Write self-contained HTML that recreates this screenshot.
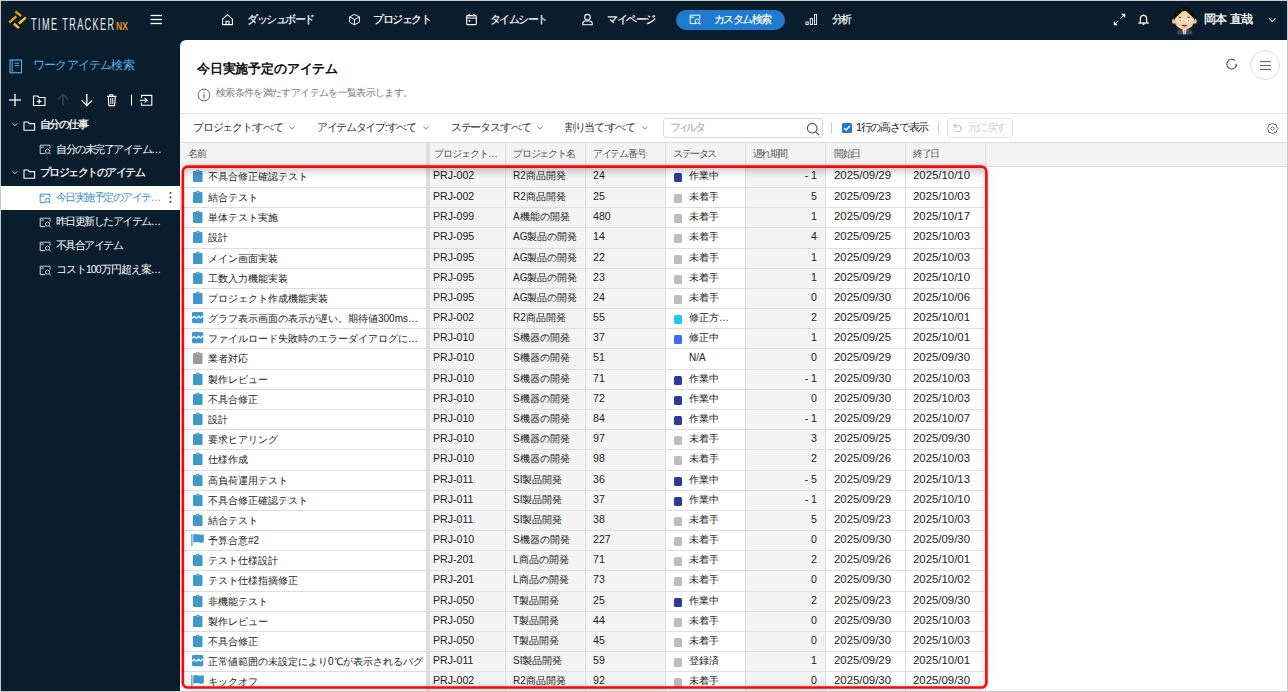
<!DOCTYPE html>
<html lang="ja">
<head>
<meta charset="utf-8">
<style>
*{box-sizing:border-box;margin:0;padding:0}
html,body{width:1288px;height:692px;overflow:hidden}
body{position:relative;background:#091d2c;font-family:"Liberation Sans",sans-serif;color:#222;}
.frame{position:absolute;left:0;top:0;width:1288px;height:692px;border:1px solid #c9c9c9;pointer-events:none;z-index:50}
.abs{position:absolute;white-space:nowrap}
/* header */
.nav{color:#fff;font-size:10.5px;top:12px;line-height:14px;-webkit-text-stroke:0.2px #fff}
.pill{position:absolute;left:676px;top:10px;width:109px;height:20px;border-radius:10px;background:#1f7bd0}
/* sidebar */
.side{color:#fff;font-size:10.5px;line-height:14px;-webkit-text-stroke:0.25px #fff}
.sel{position:absolute;left:1px;top:186px;width:179px;height:24px;background:#fff}
/* main */
.main{position:absolute;left:180px;top:40px;width:1107px;height:651px;background:#fff;border-top-left-radius:6px;overflow:hidden}
.flt{top:121px;font-size:11px;line-height:13px;color:#333}
.chev{top:126px;width:6px;height:4px}
.th{top:148px;font-size:10px;line-height:12px;color:#555}
.td{font-size:10.6px;line-height:12px;color:#222}
.tj{font-size:10px}
.dt{font-size:11.4px}
#f90{letter-spacing:-0.59px}
#f1{letter-spacing:-1.50px}
#f2{letter-spacing:-1.48px}
#f3{letter-spacing:-1.60px}
#f4{letter-spacing:-1.40px}
#f5{letter-spacing:-1.60px}
#f6{letter-spacing:-1.80px}
#f7{letter-spacing:-0.79px}
#f8{letter-spacing:-1.55px}
#f9{letter-spacing:-1.47px}
#f10{letter-spacing:-1.52px}
#f11{letter-spacing:-1.55px}
#f12{letter-spacing:-1.55px}
#f13{letter-spacing:-1.55px}
#f14{letter-spacing:-1.00px}
#f15{letter-spacing:-0.17px}
#f16{letter-spacing:-0.65px}
#f17{letter-spacing:-1.23px}
#f18{letter-spacing:-1.31px}
#f19{letter-spacing:-1.30px}
#f20{letter-spacing:-1.29px}
#f21{letter-spacing:-2.80px}
#f22{letter-spacing:-1.40px}
#f23{letter-spacing:-1.67px}
#f24{letter-spacing:-1.40px}
#f25{letter-spacing:-1.00px}
#f26{letter-spacing:-1.17px}
#f27{letter-spacing:-1.26px}
#f28{letter-spacing:-1.38px}
#f29{letter-spacing:-1.67px}
#f30{letter-spacing:-1.50px}
#f31{letter-spacing:-1.30px}
</style>
</head>
<body>
<div class="frame"></div>

<!-- ===== HEADER ===== -->
<svg class="abs" style="left:7px;top:9px" width="22" height="22" viewBox="0 0 22 22">
  <g stroke-linecap="butt" stroke-width="2.5">
    <line x1="8.4" y1="2.4" x2="14.2" y2="7.1" stroke="#f39a1e"/>
    <line x1="2.2" y1="13.6" x2="9.3" y2="7.4" stroke="#f39a1e"/>
    <line x1="12.1" y1="14.5" x2="18.9" y2="8.4" stroke="#f6c12e"/>
    <line x1="6.9" y1="14.8" x2="12.1" y2="19.1" stroke="#f6c12e"/>
  </g>
</svg>
<div class="abs" style="left:31px;top:16px;font-size:16.5px;line-height:16px;color:#eef0f2;transform:scaleX(0.55);transform-origin:0 0;letter-spacing:2.6px">TIME TRACKER</div>
<div class="abs" style="left:116px;top:22px;font-size:10px;line-height:10px;font-weight:bold;color:#e8931f;transform:scaleX(0.85);transform-origin:0 0">NX</div>
<svg class="abs" style="left:150px;top:14px" width="13" height="12"><g stroke="#fff" stroke-width="1.3"><line x1="0.5" y1="1.5" x2="12" y2="1.5"/><line x1="0.5" y1="5.5" x2="12" y2="5.5"/><line x1="0.5" y1="9.5" x2="12" y2="9.5"/></g></svg>

<div class="pill"></div>
<!-- nav icons -->
<svg class="abs" style="left:221px;top:13px" width="13" height="13" viewBox="0 0 13 13"><path d="M1.6 6.2 L6.5 1.6 L11.4 6.2 V11.6 H1.6 Z" fill="none" stroke="#fff" stroke-width="1.1" stroke-linejoin="round"/><path d="M5 11.6 V8.2 H8 V11.6" fill="none" stroke="#fff" stroke-width="1.1"/></svg>
<svg class="abs" style="left:348px;top:13px" width="13" height="13" viewBox="0 0 13 13"><path d="M6.5 1.3 L11.4 3.9 V9.2 L6.5 11.8 L1.6 9.2 V3.9 Z" fill="none" stroke="#fff" stroke-width="1" stroke-linejoin="round"/><path d="M1.6 3.9 L6.5 6.5 L11.4 3.9 M6.5 6.5 V11.8" fill="none" stroke="#fff" stroke-width="1"/></svg>
<svg class="abs" style="left:465px;top:13px" width="13" height="13" viewBox="0 0 13 13"><rect x="1.7" y="2.6" width="9.6" height="9" rx="0.8" fill="none" stroke="#fff" stroke-width="1.1"/><line x1="1.7" y1="5" x2="11.3" y2="5" stroke="#fff" stroke-width="1"/><line x1="4.2" y1="1" x2="4.2" y2="3.4" stroke="#fff" stroke-width="1.1"/><line x1="8.8" y1="1" x2="8.8" y2="3.4" stroke="#fff" stroke-width="1.1"/><rect x="3.6" y="7" width="1.6" height="1.6" fill="#fff"/></svg>
<svg class="abs" style="left:581px;top:13px" width="13" height="13" viewBox="0 0 13 13"><circle cx="6.5" cy="4.2" r="2.8" fill="none" stroke="#fff" stroke-width="1.1"/><path d="M1.8 11.8 V10.6 Q1.8 8 4.6 8 H8.4 Q11.2 8 11.2 10.6 V11.8 Z" fill="none" stroke="#fff" stroke-width="1.1" stroke-linejoin="round"/></svg>
<svg class="abs" style="left:689px;top:14px" width="13" height="11" viewBox="0 0 13 11"><path d="M7 9.6 H1.2 V1.2 H10.8 V4.8" fill="none" stroke="#fff" stroke-width="1"/><line x1="1.2" y1="3.2" x2="5" y2="3.2" stroke="#fff" stroke-width="1"/><circle cx="8.4" cy="7.2" r="2.2" fill="none" stroke="#fff" stroke-width="1"/><line x1="10" y1="8.8" x2="11.6" y2="10.4" stroke="#fff" stroke-width="1.1"/></svg>
<svg class="abs" style="left:805px;top:13px" width="13" height="13" viewBox="0 0 13 13"><rect x="1" y="9" width="2.2" height="2.6" fill="none" stroke="#fff" stroke-width="0.9"/><rect x="5.2" y="5.6" width="2.2" height="6" fill="none" stroke="#fff" stroke-width="0.9"/><rect x="9.4" y="1.6" width="2.2" height="10" fill="none" stroke="#fff" stroke-width="0.9"/></svg>
<!-- right header -->
<svg class="abs" style="left:1112px;top:12px" width="15" height="15" viewBox="0 0 15 15"><g stroke="#fff" stroke-width="0.9" fill="none"><line x1="8.6" y1="6.4" x2="12" y2="3"/><line x1="2.6" y1="12.4" x2="6.2" y2="8.8"/></g><path d="M13.2 1.8 L13.2 6 L9 1.8 Z" fill="#fff"/><path d="M1.8 13.2 L1.8 9.2 L5.8 13.2 Z" fill="#fff"/></svg>
<svg class="abs" style="left:1136px;top:12px" width="15" height="15" viewBox="0 0 15 15"><path d="M4.4 10.8 V6.4 A3.1 3.1 0 0 1 10.6 6.4 V10.8" fill="none" stroke="#fff" stroke-width="1.2"/><line x1="2.2" y1="11" x2="12.8" y2="11" stroke="#fff" stroke-width="1.3"/><path d="M5.8 11.4 L9.2 11.4 L7.5 13.6 Z" fill="#fff"/><path d="M6.9 3.4 L7.5 2 L8.1 3.4 Z" fill="#fff"/></svg>
<svg class="abs" style="left:1171px;top:5px" width="27" height="31" viewBox="0 0 27 31">
  <path d="M5.5 29 Q6 24.6 10.5 23.6 L16.5 23.6 Q21 24.6 21.5 29 Q13.5 30.2 5.5 29 Z" fill="#474747"/>
  <path d="M11.2 23.4 L15.8 23.4 L14.6 29.2 L12.4 29.2 Z" fill="#f2f2f2"/>
  <path d="M12.9 24.6 L14.1 24.6 L14.4 29.2 L12.6 29.2 Z" fill="#a89bd8"/>
  <ellipse cx="2.9" cy="16.2" rx="1.9" ry="2.5" fill="#f7c4a0"/>
  <ellipse cx="23.9" cy="16.2" rx="1.9" ry="2.5" fill="#f7c4a0"/>
  <path d="M3.6 13 Q3.6 24.2 13.4 24.2 Q23.2 24.2 23.2 13 Q23.2 6 13.4 6 Q3.6 6 3.6 13 Z" fill="#fcd5a6"/>
  <path d="M3.2 16 Q1.6 1.8 13.4 1.6 Q25.2 1.8 23.6 16 Q22.8 12.6 21.4 12 L13.4 4.6 L5.4 12 Q4 12.6 3.2 16 Z" fill="#101010"/>
  <ellipse cx="9.4" cy="15.6" rx="2.9" ry="1.8" fill="#fff" stroke="#ccc" stroke-width=".5"/>
  <ellipse cx="17.4" cy="15.6" rx="2.9" ry="1.8" fill="#fff" stroke="#ccc" stroke-width=".5"/>
  <circle cx="9.2" cy="15.4" r="0.75" fill="#666"/><circle cx="17.6" cy="15.4" r="0.75" fill="#666"/>
  <rect x="7.6" y="11.8" width="2.6" height="0.9" fill="#3a2a20"/><rect x="16.6" y="11.8" width="2.6" height="0.9" fill="#3a2a20"/>
  <path d="M10.2 20 Q13.4 19.4 16.6 20 Q13.4 23.4 10.2 20 Z" fill="#b3173c"/><ellipse cx="6.2" cy="19" rx="1.8" ry="1.2" fill="#f7b9a0" opacity=".6"/><ellipse cx="20.6" cy="19" rx="1.8" ry="1.2" fill="#f7b9a0" opacity=".6"/>
</svg>
<div id="f90" class="abs" style="--tw:48;left:1204px;top:12px;font-size:12px;line-height:14px;color:#fff;-webkit-text-stroke:0.35px #fff">岡本 直哉</div>
<div class="abs" style="left:1270px;top:15.5px;width:4.5px;height:4.5px;border-right:1px solid #e8e8e8;border-bottom:1px solid #e8e8e8;transform:rotate(45deg)"></div>
<div id="f1" class="abs nav" style="--tw:67;left:247px">ダッシュボード</div>
<div id="f2" class="abs nav" style="--tw:57.6;left:373px">プロジェクト</div>
<div id="f3" class="abs nav" style="--tw:57;left:490px">タイムシート</div>
<div id="f4" class="abs nav" style="--tw:48.4;left:607px">マイページ</div>
<div id="f5" class="abs nav" style="--tw:57;left:714px">カスタム検索</div>
<div id="f6" class="abs nav" style="--tw:19.2;left:832px">分析</div>

<!-- ===== SIDEBAR ===== -->
<div class="sel"></div>
<svg class="abs" style="left:9px;top:59px" width="14" height="15" viewBox="0 0 14 15"><rect x="1" y="1" width="11.5" height="12.8" fill="none" stroke="#5ab4e6" stroke-width="1.1"/><line x1="3.2" y1="1" x2="3.2" y2="13.8" stroke="#5ab4e6" stroke-width="1"/><line x1="5.6" y1="4.2" x2="10" y2="4.2" stroke="#5ab4e6" stroke-width="1"/><line x1="5.6" y1="6.6" x2="10" y2="6.6" stroke="#5ab4e6" stroke-width="1"/></svg>
<svg class="abs" style="left:8px;top:93px" width="150" height="14" viewBox="0 0 150 14">
 <g stroke="#fff" stroke-width="1.3" fill="none">
  <line x1="1" y1="7" x2="13" y2="7"/><line x1="7" y1="1" x2="7" y2="13"/>
  <path d="M25.5 3 H29.5 L31 4.5 H37 V12.5 H25.5 Z" stroke-width="1.1"/><line x1="28.8" y1="8.4" x2="33.6" y2="8.4" stroke-width="1.1"/><line x1="31.2" y1="6" x2="31.2" y2="10.8" stroke-width="1.1"/>
  <g stroke="#3a4b58"><line x1="55" y1="1.5" x2="55" y2="13"/><polyline points="49.8,6.6 55,1.4 60.2,6.6"/></g>
  <line x1="78.8" y1="1" x2="78.8" y2="12.5"/><polyline points="73.6,7.4 78.8,12.6 84,7.4"/>
  <path d="M99 3.4 H108.4 M100.2 3.4 L100.9 12.6 H106.6 L107.3 3.4 M101.8 3.4 V1.8 H104.8 V3.4" stroke-width="1.1"/><line x1="102.8" y1="5" x2="102.8" y2="11" stroke-width="1"/><line x1="104.8" y1="5" x2="104.8" y2="11" stroke-width="1"/>
  <line x1="123.5" y1="1.6" x2="123.5" y2="12.6" stroke-width="1.1"/>
  <path d="M133.5 5 V2.4 H143.8 V12.2 H133.5 V9.6" stroke-width="1.1"/><line x1="131.8" y1="7.3" x2="139" y2="7.3" stroke-width="1.1"/><polyline points="136.6,5 139,7.3 136.6,9.6" stroke-width="1.1"/>
 </g>
</svg>
<svg class="abs" style="left:10px;top:119px" width="30" height="60" viewBox="0 0 30 60"><g fill="none" stroke="#c9ced3" stroke-width="1"><polyline points="2.4,4.2 5,6.6 7.6,4.2"/><polyline points="2.4,52.2 5,54.6 7.6,52.2"/></g><g fill="none" stroke="#fff" stroke-width="1.1"><path d="M14 3 H18 L19.4 4.6 H24.6 V11.2 H14 Z"/><path d="M14 51 H18 L19.4 52.6 H24.6 V59.2 H14 Z"/></g></svg>
<svg class="abs" style="left:39px;top:144px" width="14" height="132" viewBox="0 0 14 132">
 <g fill="none" stroke-width="1">
  <g stroke="#c6cbd0" transform="translate(0,0)"><path d="M6.6 9.6 H1.2 V1.2 H11 V4.6"/><line x1="1.2" y1="3.2" x2="5" y2="3.2"/><circle cx="8.6" cy="7.2" r="2.1"/><line x1="10.1" y1="8.7" x2="11.8" y2="10.4"/></g>
  <g stroke="#3a8fd6" transform="translate(0,49)"><path d="M6.6 9.6 H1.2 V1.2 H11 V4.6"/><line x1="1.2" y1="3.2" x2="5" y2="3.2"/><circle cx="8.6" cy="7.2" r="2.1"/><line x1="10.1" y1="8.7" x2="11.8" y2="10.4"/></g>
  <g stroke="#c6cbd0" transform="translate(0,73)"><path d="M6.6 9.6 H1.2 V1.2 H11 V4.6"/><line x1="1.2" y1="3.2" x2="5" y2="3.2"/><circle cx="8.6" cy="7.2" r="2.1"/><line x1="10.1" y1="8.7" x2="11.8" y2="10.4"/></g>
  <g stroke="#c6cbd0" transform="translate(0,97)"><path d="M6.6 9.6 H1.2 V1.2 H11 V4.6"/><line x1="1.2" y1="3.2" x2="5" y2="3.2"/><circle cx="8.6" cy="7.2" r="2.1"/><line x1="10.1" y1="8.7" x2="11.8" y2="10.4"/></g>
  <g stroke="#c6cbd0" transform="translate(0,121)"><path d="M6.6 9.6 H1.2 V1.2 H11 V4.6"/><line x1="1.2" y1="3.2" x2="5" y2="3.2"/><circle cx="8.6" cy="7.2" r="2.1"/><line x1="10.1" y1="8.7" x2="11.8" y2="10.4"/></g>
 </g>
</svg>
<svg class="abs" style="left:168px;top:191px" width="5" height="13"><g fill="#555"><circle cx="2.5" cy="2" r="1.1"/><circle cx="2.5" cy="6.4" r="1.1"/><circle cx="2.5" cy="10.8" r="1.1"/></g></svg>
<div id="f7" class="abs" style="--tw:100.7;left:33px;top:58px;font-size:12px;line-height:14px;color:#52b4ec">ワークアイテム検索</div>
<div id="f8" class="abs side" style="--tw:47.8;left:40px;top:117px">自分の仕事</div>
<div id="f9" class="abs side" style="--tw:104.8;left:56px;top:142px;-webkit-text-stroke:0;">自分の未完了アイテム…</div>
<div id="f10" class="abs side" style="--tw:104.8;left:40px;top:165px">プロジェクトのアイテム</div>
<div id="f11" class="abs side" style="--tw:104;left:56px;top:190px;-webkit-text-stroke:0;color:#3c8fd0">今日実施予定のアイテ…</div>
<div id="f12" class="abs side" style="--tw:104;left:56px;top:214px;-webkit-text-stroke:0;">昨日更新したアイテム…</div>
<div id="f13" class="abs side" style="--tw:66.7;left:56px;top:238px;-webkit-text-stroke:0;">不具合アイテム</div>
<div id="f14" class="abs side" style="--tw:104;left:56px;top:262px;-webkit-text-stroke:0;">コスト100万円超え案…</div>

<!-- ===== MAIN ===== -->
<div class="main"></div>
<!-- title -->
<div id="f15" class="abs" style="--tw:140.3;left:197px;top:61px;font-size:13px;line-height:16px;font-weight:bold;color:#111">今日実施予定のアイテム</div>
<svg class="abs" style="left:197px;top:88px" width="14" height="14" viewBox="0 0 14 14"><circle cx="7" cy="7" r="5.9" fill="none" stroke="#666" stroke-width="1"/><rect x="6.5" y="6" width="1.1" height="4.3" fill="#666"/><rect x="6.5" y="3.8" width="1.1" height="1.1" fill="#666"/></svg>
<div id="f16" class="abs" style="--tw:196;left:216px;top:87px;font-size:10px;line-height:12px;color:#7a7a7a">検索条件を満たすアイテムを一覧表示します。</div>
<!-- refresh + menu -->
<svg class="abs" style="left:1225px;top:57px" width="15" height="15" viewBox="0 0 15 15"><path d="M11.6 7.5 A4.9 4.9 0 1 1 9.9 3.4" fill="none" stroke="#555" stroke-width="1.1"/><path d="M11 6.3 L12.4 8.6 L10.2 8.4 Z" fill="#555"/></svg>
<div class="abs" style="left:1250px;top:50px;width:30px;height:30px;border:1px solid #dcdcdc;border-radius:50%"></div>
<svg class="abs" style="left:1259px;top:60px" width="13" height="11"><g stroke="#666" stroke-width="1.1"><line x1="1" y1="1.6" x2="12" y2="1.6"/><line x1="1" y1="5.5" x2="12" y2="5.5"/><line x1="1" y1="9.4" x2="12" y2="9.4"/></g></svg>
<!-- filter bar -->
<div class="abs" style="left:180px;top:113px;width:1107px;height:1px;background:#e2e2e2"></div>
<div id="f17" class="abs flt" style="--tw:90;left:193px">プロジェクト:すべて</div><svg class="abs chev" style="left:289px" width="6" height="4" viewBox="0 0 6 4"><polyline points="0.4,0.6 3,3.2 5.6,0.6" fill="none" stroke="#777" stroke-width="0.9"/></svg>
<div id="f18" class="abs flt" style="--tw:99;left:317px">アイテムタイプ:すべて</div><svg class="abs chev" style="left:423px" width="6" height="4" viewBox="0 0 6 4"><polyline points="0.4,0.6 3,3.2 5.6,0.6" fill="none" stroke="#777" stroke-width="0.9"/></svg>
<div id="f19" class="abs flt" style="--tw:79.7;left:451px">ステータス:すべて</div><svg class="abs chev" style="left:537px" width="6" height="4" viewBox="0 0 6 4"><polyline points="0.4,0.6 3,3.2 5.6,0.6" fill="none" stroke="#777" stroke-width="0.9"/></svg>
<div id="f20" class="abs flt" style="--tw:70;left:565px">割り当て:すべて</div><svg class="abs chev" style="left:642px" width="6" height="4" viewBox="0 0 6 4"><polyline points="0.4,0.6 3,3.2 5.6,0.6" fill="none" stroke="#777" stroke-width="0.9"/></svg>
<div class="abs" style="left:663px;top:118px;width:160px;height:20px;border:1px solid #d9d9d9;border-radius:3px;background:#fff"></div>
<div id="f21" class="abs" style="--tw:34.6;left:670px;top:121px;font-size:11px;line-height:13px;color:#a0a0a0">フィルタ</div>
<svg class="abs" style="left:805px;top:121px" width="16" height="16" viewBox="0 0 16 16"><circle cx="7.2" cy="7.2" r="4.8" fill="none" stroke="#555" stroke-width="1.1"/><line x1="10.6" y1="10.6" x2="14.2" y2="14.2" stroke="#555" stroke-width="1.2"/></svg>
<div class="abs" style="left:831px;top:122px;width:1px;height:12px;background:#d0d0d0"></div>
<div class="abs" style="left:842px;top:123px;width:10px;height:10px;border-radius:1.5px;background:#2379cf"></div>
<svg class="abs" style="left:842px;top:123px" width="10" height="10"><polyline points="2.2,5 4.2,7 7.8,3" fill="none" stroke="#fff" stroke-width="1.4"/></svg>
<div id="f22" class="abs flt" style="--tw:72.3;left:856px;color:#222">1行の高さで表示</div>
<div class="abs" style="left:938px;top:122px;width:1px;height:12px;background:#d0d0d0"></div>
<div class="abs" style="left:947px;top:118px;width:66px;height:20px;border:1px solid #e6e6e6;border-radius:3px"></div>
<svg class="abs" style="left:952px;top:122px" width="11" height="12" viewBox="0 0 11 12"><path d="M2.5 3.8 H6.2 A3 3 0 0 1 6.2 9.8 H3" fill="none" stroke="#bdbdbd" stroke-width="1.1"/><path d="M4.2 1.8 L1.8 3.8 L4.2 5.8" fill="none" stroke="#bdbdbd" stroke-width="1.1"/></svg>
<div id="f23" class="abs flt" style="--tw:38;left:968px;color:#d2d2d2">元に戻す</div>
<svg class="abs" style="left:1266px;top:122px" width="13" height="13" viewBox="0 0 13 13"><path d="M6.5 0.9 L8 2.4 L10.3 2.6 L10.5 4.9 L12 6.5 L10.5 8.1 L10.3 10.4 L8 10.6 L6.5 12.1 L5 10.6 L2.7 10.4 L2.5 8.1 L1 6.5 L2.5 4.9 L2.7 2.6 L5 2.4 Z" fill="none" stroke="#666" stroke-width="1"/><path d="M6.5 4.6 L8.4 6.5 L6.5 8.4 L4.6 6.5 Z" fill="none" stroke="#666" stroke-width="1"/></svg>
<!-- table header -->
<div class="abs" style="left:180px;top:142px;width:1107px;height:25px;background:#f3f3f3;border-top:1px solid #dcdcdc;border-bottom:1px solid #dcdcdc"></div>
<div id="f24" class="abs th" style="--tw:17.6;left:188px">名前</div>
<div id="f25" class="abs th" style="--tw:63;left:434px">プロジェクト…</div>
<div id="f26" class="abs th" style="--tw:62;left:513px">プロジェクト名</div>
<div id="f27" class="abs th" style="--tw:52.7;left:593px">アイテム番号</div>
<div id="f28" class="abs th" style="--tw:43.5;left:673px">ステータス</div>
<div id="f29" class="abs th" style="--tw:34;left:753px">遅れ期間</div>
<div id="f30" class="abs th" style="--tw:26;left:834px">開始日</div>
<div id="f31" class="abs th" style="--tw:26.4;left:913px">終了日</div>
<div class="abs" style="left:430px;top:167px;width:235px;height:525px;background:#f4f4f4"></div>
<div class="abs" style="left:745px;top:167px;width:80px;height:525px;background:#f4f4f4"></div>
<div class="abs" style="left:505px;top:143px;width:1px;height:549px;background:#dedede"></div>
<div class="abs" style="left:585px;top:143px;width:1px;height:549px;background:#dedede"></div>
<div class="abs" style="left:665px;top:143px;width:1px;height:549px;background:#dedede"></div>
<div class="abs" style="left:745px;top:143px;width:1px;height:549px;background:#dedede"></div>
<div class="abs" style="left:825px;top:143px;width:1px;height:549px;background:#dedede"></div>
<div class="abs" style="left:905px;top:143px;width:1px;height:549px;background:#dedede"></div>
<div class="abs" style="left:985px;top:143px;width:1px;height:549px;background:#dedede"></div>
<div class="abs" style="left:426px;top:143px;width:4px;height:549px;background:#dedede"></div>
<div class="abs" style="left:180px;top:187px;width:805px;height:1px;background:#dedede"></div>
<svg class="abs" style="left:192px;top:169px" width="12" height="14" viewBox="0 0 12 14"><rect x="1" y="2" width="9.5" height="11" rx="0.8" fill="#3d98cc"/><rect x="4.3" y="0.8" width="3" height="2.2" rx="0.6" fill="#3d98cc"/><rect x="5.3" y="1.8" width="1" height="1" fill="#fff" opacity=".8"/></svg>
<div class="abs td tj" style="left:208px;top:171px;width:218px;overflow:hidden">不具合修正確認テスト</div>
<div class="abs td" style="left:433px;top:169px">PRJ-002</div>
<div class="abs td tj" style="left:513px;top:170px">R2商品開発</div>
<div class="abs td" style="left:593px;top:169px">24</div>
<div class="abs" style="left:674px;top:173px;width:8px;height:9px;border-radius:1.5px;background:#2b3a9c"></div>
<div class="abs td tj" style="left:689px;top:170px">作業中</div>
<div class="abs td" style="left:745px;width:72px;text-align:right;top:169px">- 1</div>
<div class="abs td dt" style="left:834px;top:169px">2025/09/29</div>
<div class="abs td dt" style="left:913px;top:169px">2025/10/10</div>
<div class="abs" style="left:180px;top:207px;width:805px;height:1px;background:#dedede"></div>
<svg class="abs" style="left:192px;top:190px" width="12" height="14" viewBox="0 0 12 14"><rect x="1" y="2" width="9.5" height="11" rx="0.8" fill="#3d98cc"/><rect x="4.3" y="0.8" width="3" height="2.2" rx="0.6" fill="#3d98cc"/><rect x="5.3" y="1.8" width="1" height="1" fill="#fff" opacity=".8"/></svg>
<div class="abs td tj" style="left:208px;top:192px;width:218px;overflow:hidden">結合テスト</div>
<div class="abs td" style="left:433px;top:190px">PRJ-002</div>
<div class="abs td tj" style="left:513px;top:191px">R2商品開発</div>
<div class="abs td" style="left:593px;top:190px">25</div>
<div class="abs" style="left:674px;top:194px;width:8px;height:9px;border-radius:1.5px;background:#bdbdbd"></div>
<div class="abs td tj" style="left:689px;top:191px">未着手</div>
<div class="abs td" style="left:745px;width:72px;text-align:right;top:190px">5</div>
<div class="abs td dt" style="left:834px;top:190px">2025/09/23</div>
<div class="abs td dt" style="left:913px;top:190px">2025/10/03</div>
<div class="abs" style="left:180px;top:227px;width:805px;height:1px;background:#dedede"></div>
<svg class="abs" style="left:192px;top:210px" width="12" height="14" viewBox="0 0 12 14"><rect x="1" y="2" width="9.5" height="11" rx="0.8" fill="#3d98cc"/><rect x="4.3" y="0.8" width="3" height="2.2" rx="0.6" fill="#3d98cc"/><rect x="5.3" y="1.8" width="1" height="1" fill="#fff" opacity=".8"/></svg>
<div class="abs td tj" style="left:208px;top:212px;width:218px;overflow:hidden">単体テスト実施</div>
<div class="abs td" style="left:433px;top:210px">PRJ-099</div>
<div class="abs td tj" style="left:513px;top:211px">A機能の開発</div>
<div class="abs td" style="left:593px;top:210px">480</div>
<div class="abs" style="left:674px;top:214px;width:8px;height:9px;border-radius:1.5px;background:#bdbdbd"></div>
<div class="abs td tj" style="left:689px;top:211px">未着手</div>
<div class="abs td" style="left:745px;width:72px;text-align:right;top:210px">1</div>
<div class="abs td dt" style="left:834px;top:210px">2025/09/29</div>
<div class="abs td dt" style="left:913px;top:210px">2025/10/17</div>
<div class="abs" style="left:180px;top:248px;width:805px;height:1px;background:#dedede"></div>
<svg class="abs" style="left:192px;top:230px" width="12" height="14" viewBox="0 0 12 14"><rect x="1" y="2" width="9.5" height="11" rx="0.8" fill="#3d98cc"/><rect x="4.3" y="0.8" width="3" height="2.2" rx="0.6" fill="#3d98cc"/><rect x="5.3" y="1.8" width="1" height="1" fill="#fff" opacity=".8"/></svg>
<div class="abs td tj" style="left:208px;top:232px;width:218px;overflow:hidden">設計</div>
<div class="abs td" style="left:433px;top:230px">PRJ-095</div>
<div class="abs td tj" style="left:513px;top:231px">AG製品の開発</div>
<div class="abs td" style="left:593px;top:230px">14</div>
<div class="abs" style="left:674px;top:234px;width:8px;height:9px;border-radius:1.5px;background:#bdbdbd"></div>
<div class="abs td tj" style="left:689px;top:231px">未着手</div>
<div class="abs td" style="left:745px;width:72px;text-align:right;top:230px">4</div>
<div class="abs td dt" style="left:834px;top:230px">2025/09/25</div>
<div class="abs td dt" style="left:913px;top:230px">2025/10/03</div>
<div class="abs" style="left:180px;top:268px;width:805px;height:1px;background:#dedede"></div>
<svg class="abs" style="left:192px;top:251px" width="12" height="14" viewBox="0 0 12 14"><rect x="1" y="2" width="9.5" height="11" rx="0.8" fill="#3d98cc"/><rect x="4.3" y="0.8" width="3" height="2.2" rx="0.6" fill="#3d98cc"/><rect x="5.3" y="1.8" width="1" height="1" fill="#fff" opacity=".8"/></svg>
<div class="abs td tj" style="left:208px;top:253px;width:218px;overflow:hidden">メイン画面実装</div>
<div class="abs td" style="left:433px;top:251px">PRJ-095</div>
<div class="abs td tj" style="left:513px;top:252px">AG製品の開発</div>
<div class="abs td" style="left:593px;top:251px">22</div>
<div class="abs" style="left:674px;top:255px;width:8px;height:9px;border-radius:1.5px;background:#bdbdbd"></div>
<div class="abs td tj" style="left:689px;top:252px">未着手</div>
<div class="abs td" style="left:745px;width:72px;text-align:right;top:251px">1</div>
<div class="abs td dt" style="left:834px;top:251px">2025/09/29</div>
<div class="abs td dt" style="left:913px;top:251px">2025/10/03</div>
<div class="abs" style="left:180px;top:288px;width:805px;height:1px;background:#dedede"></div>
<svg class="abs" style="left:192px;top:271px" width="12" height="14" viewBox="0 0 12 14"><rect x="1" y="2" width="9.5" height="11" rx="0.8" fill="#3d98cc"/><rect x="4.3" y="0.8" width="3" height="2.2" rx="0.6" fill="#3d98cc"/><rect x="5.3" y="1.8" width="1" height="1" fill="#fff" opacity=".8"/></svg>
<div class="abs td tj" style="left:208px;top:273px;width:218px;overflow:hidden">工数入力機能実装</div>
<div class="abs td" style="left:433px;top:271px">PRJ-095</div>
<div class="abs td tj" style="left:513px;top:272px">AG製品の開発</div>
<div class="abs td" style="left:593px;top:271px">23</div>
<div class="abs" style="left:674px;top:275px;width:8px;height:9px;border-radius:1.5px;background:#bdbdbd"></div>
<div class="abs td tj" style="left:689px;top:272px">未着手</div>
<div class="abs td" style="left:745px;width:72px;text-align:right;top:271px">1</div>
<div class="abs td dt" style="left:834px;top:271px">2025/09/29</div>
<div class="abs td dt" style="left:913px;top:271px">2025/10/10</div>
<div class="abs" style="left:180px;top:308px;width:805px;height:1px;background:#dedede"></div>
<svg class="abs" style="left:192px;top:291px" width="12" height="14" viewBox="0 0 12 14"><rect x="1" y="2" width="9.5" height="11" rx="0.8" fill="#3d98cc"/><rect x="4.3" y="0.8" width="3" height="2.2" rx="0.6" fill="#3d98cc"/><rect x="5.3" y="1.8" width="1" height="1" fill="#fff" opacity=".8"/></svg>
<div class="abs td tj" style="left:208px;top:293px;width:218px;overflow:hidden">プロジェクト作成機能実装</div>
<div class="abs td" style="left:433px;top:291px">PRJ-095</div>
<div class="abs td tj" style="left:513px;top:292px">AG製品の開発</div>
<div class="abs td" style="left:593px;top:291px">24</div>
<div class="abs" style="left:674px;top:295px;width:8px;height:9px;border-radius:1.5px;background:#bdbdbd"></div>
<div class="abs td tj" style="left:689px;top:292px">未着手</div>
<div class="abs td" style="left:745px;width:72px;text-align:right;top:291px">0</div>
<div class="abs td dt" style="left:834px;top:291px">2025/09/30</div>
<div class="abs td dt" style="left:913px;top:291px">2025/10/06</div>
<div class="abs" style="left:180px;top:328px;width:805px;height:1px;background:#dedede"></div>
<svg class="abs" style="left:191px;top:311px" width="13" height="13" viewBox="0 0 13 13"><rect x="1" y="1" width="11.3" height="11.2" rx="1.4" fill="#3d98cc"/><polyline points="1,7.2 3.2,5.4 5.4,7.4 7.6,5.2 9.6,7 12.3,4.8" fill="none" stroke="#fff" stroke-width="1.2" stroke-linejoin="miter"/></svg>
<div class="abs td tj" style="left:208px;top:313px;width:218px;overflow:hidden">グラフ表示画面の表示が遅い。期待値300ms…</div>
<div class="abs td" style="left:433px;top:311px">PRJ-002</div>
<div class="abs td tj" style="left:513px;top:312px">R2商品開発</div>
<div class="abs td" style="left:593px;top:311px">55</div>
<div class="abs" style="left:674px;top:315px;width:8px;height:9px;border-radius:1.5px;background:#1ec8f0"></div>
<div class="abs td tj" style="left:689px;top:312px">修正方…</div>
<div class="abs td" style="left:745px;width:72px;text-align:right;top:311px">2</div>
<div class="abs td dt" style="left:834px;top:311px">2025/09/25</div>
<div class="abs td dt" style="left:913px;top:311px">2025/10/01</div>
<div class="abs" style="left:180px;top:348px;width:805px;height:1px;background:#dedede"></div>
<svg class="abs" style="left:191px;top:331px" width="13" height="13" viewBox="0 0 13 13"><rect x="1" y="1" width="11.3" height="11.2" rx="1.4" fill="#3d98cc"/><polyline points="1,7.2 3.2,5.4 5.4,7.4 7.6,5.2 9.6,7 12.3,4.8" fill="none" stroke="#fff" stroke-width="1.2" stroke-linejoin="miter"/></svg>
<div class="abs td tj" style="left:208px;top:333px;width:218px;overflow:hidden">ファイルロード失敗時のエラーダイアログに…</div>
<div class="abs td" style="left:433px;top:331px">PRJ-010</div>
<div class="abs td tj" style="left:513px;top:332px">S機器の開発</div>
<div class="abs td" style="left:593px;top:331px">37</div>
<div class="abs" style="left:674px;top:335px;width:8px;height:9px;border-radius:1.5px;background:#3d6ef0"></div>
<div class="abs td tj" style="left:689px;top:332px">修正中</div>
<div class="abs td" style="left:745px;width:72px;text-align:right;top:331px">1</div>
<div class="abs td dt" style="left:834px;top:331px">2025/09/25</div>
<div class="abs td dt" style="left:913px;top:331px">2025/10/01</div>
<div class="abs" style="left:180px;top:369px;width:805px;height:1px;background:#dedede"></div>
<svg class="abs" style="left:192px;top:351px" width="12" height="14" viewBox="0 0 12 14"><rect x="1" y="2" width="9.5" height="11" rx="0.8" fill="#9c9c9c"/><rect x="4.3" y="0.8" width="3" height="2.2" rx="0.6" fill="#9c9c9c"/><rect x="5.3" y="1.8" width="1" height="1" fill="#fff" opacity=".8"/></svg>
<div class="abs td tj" style="left:208px;top:353px;width:218px;overflow:hidden">業者対応</div>
<div class="abs td" style="left:433px;top:351px">PRJ-010</div>
<div class="abs td tj" style="left:513px;top:352px">S機器の開発</div>
<div class="abs td" style="left:593px;top:351px">51</div>
<div class="abs td tj" style="left:689px;top:352px">N/A</div>
<div class="abs td" style="left:745px;width:72px;text-align:right;top:351px">0</div>
<div class="abs td dt" style="left:834px;top:351px">2025/09/29</div>
<div class="abs td dt" style="left:913px;top:351px">2025/09/30</div>
<div class="abs" style="left:180px;top:389px;width:805px;height:1px;background:#dedede"></div>
<svg class="abs" style="left:192px;top:372px" width="12" height="14" viewBox="0 0 12 14"><rect x="1" y="2" width="9.5" height="11" rx="0.8" fill="#3d98cc"/><rect x="4.3" y="0.8" width="3" height="2.2" rx="0.6" fill="#3d98cc"/><rect x="5.3" y="1.8" width="1" height="1" fill="#fff" opacity=".8"/></svg>
<div class="abs td tj" style="left:208px;top:374px;width:218px;overflow:hidden">製作レビュー</div>
<div class="abs td" style="left:433px;top:372px">PRJ-010</div>
<div class="abs td tj" style="left:513px;top:373px">S機器の開発</div>
<div class="abs td" style="left:593px;top:372px">71</div>
<div class="abs" style="left:674px;top:376px;width:8px;height:9px;border-radius:1.5px;background:#2b3a9c"></div>
<div class="abs td tj" style="left:689px;top:373px">作業中</div>
<div class="abs td" style="left:745px;width:72px;text-align:right;top:372px">- 1</div>
<div class="abs td dt" style="left:834px;top:372px">2025/09/30</div>
<div class="abs td dt" style="left:913px;top:372px">2025/10/03</div>
<div class="abs" style="left:180px;top:409px;width:805px;height:1px;background:#dedede"></div>
<svg class="abs" style="left:192px;top:392px" width="12" height="14" viewBox="0 0 12 14"><rect x="1" y="2" width="9.5" height="11" rx="0.8" fill="#3d98cc"/><rect x="4.3" y="0.8" width="3" height="2.2" rx="0.6" fill="#3d98cc"/><rect x="5.3" y="1.8" width="1" height="1" fill="#fff" opacity=".8"/></svg>
<div class="abs td tj" style="left:208px;top:394px;width:218px;overflow:hidden">不具合修正</div>
<div class="abs td" style="left:433px;top:392px">PRJ-010</div>
<div class="abs td tj" style="left:513px;top:393px">S機器の開発</div>
<div class="abs td" style="left:593px;top:392px">72</div>
<div class="abs" style="left:674px;top:396px;width:8px;height:9px;border-radius:1.5px;background:#2b3a9c"></div>
<div class="abs td tj" style="left:689px;top:393px">作業中</div>
<div class="abs td" style="left:745px;width:72px;text-align:right;top:392px">0</div>
<div class="abs td dt" style="left:834px;top:392px">2025/09/30</div>
<div class="abs td dt" style="left:913px;top:392px">2025/10/03</div>
<div class="abs" style="left:180px;top:429px;width:805px;height:1px;background:#dedede"></div>
<svg class="abs" style="left:192px;top:412px" width="12" height="14" viewBox="0 0 12 14"><rect x="1" y="2" width="9.5" height="11" rx="0.8" fill="#3d98cc"/><rect x="4.3" y="0.8" width="3" height="2.2" rx="0.6" fill="#3d98cc"/><rect x="5.3" y="1.8" width="1" height="1" fill="#fff" opacity=".8"/></svg>
<div class="abs td tj" style="left:208px;top:414px;width:218px;overflow:hidden">設計</div>
<div class="abs td" style="left:433px;top:412px">PRJ-010</div>
<div class="abs td tj" style="left:513px;top:413px">S機器の開発</div>
<div class="abs td" style="left:593px;top:412px">84</div>
<div class="abs" style="left:674px;top:416px;width:8px;height:9px;border-radius:1.5px;background:#2b3a9c"></div>
<div class="abs td tj" style="left:689px;top:413px">作業中</div>
<div class="abs td" style="left:745px;width:72px;text-align:right;top:412px">- 1</div>
<div class="abs td dt" style="left:834px;top:412px">2025/09/29</div>
<div class="abs td dt" style="left:913px;top:412px">2025/10/07</div>
<div class="abs" style="left:180px;top:449px;width:805px;height:1px;background:#dedede"></div>
<svg class="abs" style="left:192px;top:432px" width="12" height="14" viewBox="0 0 12 14"><rect x="1" y="2" width="9.5" height="11" rx="0.8" fill="#3d98cc"/><rect x="4.3" y="0.8" width="3" height="2.2" rx="0.6" fill="#3d98cc"/><rect x="5.3" y="1.8" width="1" height="1" fill="#fff" opacity=".8"/></svg>
<div class="abs td tj" style="left:208px;top:434px;width:218px;overflow:hidden">要求ヒアリング</div>
<div class="abs td" style="left:433px;top:432px">PRJ-010</div>
<div class="abs td tj" style="left:513px;top:433px">S機器の開発</div>
<div class="abs td" style="left:593px;top:432px">97</div>
<div class="abs" style="left:674px;top:436px;width:8px;height:9px;border-radius:1.5px;background:#bdbdbd"></div>
<div class="abs td tj" style="left:689px;top:433px">未着手</div>
<div class="abs td" style="left:745px;width:72px;text-align:right;top:432px">3</div>
<div class="abs td dt" style="left:834px;top:432px">2025/09/25</div>
<div class="abs td dt" style="left:913px;top:432px">2025/09/30</div>
<div class="abs" style="left:180px;top:470px;width:805px;height:1px;background:#dedede"></div>
<svg class="abs" style="left:192px;top:452px" width="12" height="14" viewBox="0 0 12 14"><rect x="1" y="2" width="9.5" height="11" rx="0.8" fill="#3d98cc"/><rect x="4.3" y="0.8" width="3" height="2.2" rx="0.6" fill="#3d98cc"/><rect x="5.3" y="1.8" width="1" height="1" fill="#fff" opacity=".8"/></svg>
<div class="abs td tj" style="left:208px;top:454px;width:218px;overflow:hidden">仕様作成</div>
<div class="abs td" style="left:433px;top:452px">PRJ-010</div>
<div class="abs td tj" style="left:513px;top:453px">S機器の開発</div>
<div class="abs td" style="left:593px;top:452px">98</div>
<div class="abs" style="left:674px;top:456px;width:8px;height:9px;border-radius:1.5px;background:#bdbdbd"></div>
<div class="abs td tj" style="left:689px;top:453px">未着手</div>
<div class="abs td" style="left:745px;width:72px;text-align:right;top:452px">2</div>
<div class="abs td dt" style="left:834px;top:452px">2025/09/26</div>
<div class="abs td dt" style="left:913px;top:452px">2025/10/03</div>
<div class="abs" style="left:180px;top:490px;width:805px;height:1px;background:#dedede"></div>
<svg class="abs" style="left:192px;top:473px" width="12" height="14" viewBox="0 0 12 14"><rect x="1" y="2" width="9.5" height="11" rx="0.8" fill="#3d98cc"/><rect x="4.3" y="0.8" width="3" height="2.2" rx="0.6" fill="#3d98cc"/><rect x="5.3" y="1.8" width="1" height="1" fill="#fff" opacity=".8"/></svg>
<div class="abs td tj" style="left:208px;top:475px;width:218px;overflow:hidden">高負荷運用テスト</div>
<div class="abs td" style="left:433px;top:473px">PRJ-011</div>
<div class="abs td tj" style="left:513px;top:474px">SI製品開発</div>
<div class="abs td" style="left:593px;top:473px">36</div>
<div class="abs" style="left:674px;top:477px;width:8px;height:9px;border-radius:1.5px;background:#2b3a9c"></div>
<div class="abs td tj" style="left:689px;top:474px">作業中</div>
<div class="abs td" style="left:745px;width:72px;text-align:right;top:473px">- 5</div>
<div class="abs td dt" style="left:834px;top:473px">2025/09/29</div>
<div class="abs td dt" style="left:913px;top:473px">2025/10/13</div>
<div class="abs" style="left:180px;top:510px;width:805px;height:1px;background:#dedede"></div>
<svg class="abs" style="left:192px;top:493px" width="12" height="14" viewBox="0 0 12 14"><rect x="1" y="2" width="9.5" height="11" rx="0.8" fill="#3d98cc"/><rect x="4.3" y="0.8" width="3" height="2.2" rx="0.6" fill="#3d98cc"/><rect x="5.3" y="1.8" width="1" height="1" fill="#fff" opacity=".8"/></svg>
<div class="abs td tj" style="left:208px;top:495px;width:218px;overflow:hidden">不具合修正確認テスト</div>
<div class="abs td" style="left:433px;top:493px">PRJ-011</div>
<div class="abs td tj" style="left:513px;top:494px">SI製品開発</div>
<div class="abs td" style="left:593px;top:493px">37</div>
<div class="abs" style="left:674px;top:497px;width:8px;height:9px;border-radius:1.5px;background:#2b3a9c"></div>
<div class="abs td tj" style="left:689px;top:494px">作業中</div>
<div class="abs td" style="left:745px;width:72px;text-align:right;top:493px">- 1</div>
<div class="abs td dt" style="left:834px;top:493px">2025/09/29</div>
<div class="abs td dt" style="left:913px;top:493px">2025/10/10</div>
<div class="abs" style="left:180px;top:530px;width:805px;height:1px;background:#dedede"></div>
<svg class="abs" style="left:192px;top:513px" width="12" height="14" viewBox="0 0 12 14"><rect x="1" y="2" width="9.5" height="11" rx="0.8" fill="#3d98cc"/><rect x="4.3" y="0.8" width="3" height="2.2" rx="0.6" fill="#3d98cc"/><rect x="5.3" y="1.8" width="1" height="1" fill="#fff" opacity=".8"/></svg>
<div class="abs td tj" style="left:208px;top:515px;width:218px;overflow:hidden">結合テスト</div>
<div class="abs td" style="left:433px;top:513px">PRJ-011</div>
<div class="abs td tj" style="left:513px;top:514px">SI製品開発</div>
<div class="abs td" style="left:593px;top:513px">38</div>
<div class="abs" style="left:674px;top:517px;width:8px;height:9px;border-radius:1.5px;background:#bdbdbd"></div>
<div class="abs td tj" style="left:689px;top:514px">未着手</div>
<div class="abs td" style="left:745px;width:72px;text-align:right;top:513px">5</div>
<div class="abs td dt" style="left:834px;top:513px">2025/09/23</div>
<div class="abs td dt" style="left:913px;top:513px">2025/10/03</div>
<div class="abs" style="left:180px;top:550px;width:805px;height:1px;background:#dedede"></div>
<svg class="abs" style="left:190px;top:533px" width="15" height="14" viewBox="0 0 15 14"><rect x="1" y="1" width="1.6" height="12" fill="#3d98cc" opacity=".75"/><path d="M3.3 1.5 Q6 0.6 8.5 1.4 T13.8 1.3 V9.2 Q11 10.2 8.5 9.3 T3.3 9.6 Z" fill="#3d98cc"/></svg>
<div class="abs td tj" style="left:208px;top:535px;width:218px;overflow:hidden">予算合意#2</div>
<div class="abs td" style="left:433px;top:533px">PRJ-010</div>
<div class="abs td tj" style="left:513px;top:534px">S機器の開発</div>
<div class="abs td" style="left:593px;top:533px">227</div>
<div class="abs" style="left:674px;top:537px;width:8px;height:9px;border-radius:1.5px;background:#bdbdbd"></div>
<div class="abs td tj" style="left:689px;top:534px">未着手</div>
<div class="abs td" style="left:745px;width:72px;text-align:right;top:533px">0</div>
<div class="abs td dt" style="left:834px;top:533px">2025/09/30</div>
<div class="abs td dt" style="left:913px;top:533px">2025/09/30</div>
<div class="abs" style="left:180px;top:570px;width:805px;height:1px;background:#dedede"></div>
<svg class="abs" style="left:192px;top:553px" width="12" height="14" viewBox="0 0 12 14"><rect x="1" y="2" width="9.5" height="11" rx="0.8" fill="#3d98cc"/><rect x="4.3" y="0.8" width="3" height="2.2" rx="0.6" fill="#3d98cc"/><rect x="5.3" y="1.8" width="1" height="1" fill="#fff" opacity=".8"/></svg>
<div class="abs td tj" style="left:208px;top:555px;width:218px;overflow:hidden">テスト仕様設計</div>
<div class="abs td" style="left:433px;top:553px">PRJ-201</div>
<div class="abs td tj" style="left:513px;top:554px">L商品の開発</div>
<div class="abs td" style="left:593px;top:553px">71</div>
<div class="abs" style="left:674px;top:557px;width:8px;height:9px;border-radius:1.5px;background:#bdbdbd"></div>
<div class="abs td tj" style="left:689px;top:554px">未着手</div>
<div class="abs td" style="left:745px;width:72px;text-align:right;top:553px">2</div>
<div class="abs td dt" style="left:834px;top:553px">2025/09/26</div>
<div class="abs td dt" style="left:913px;top:553px">2025/10/01</div>
<div class="abs" style="left:180px;top:591px;width:805px;height:1px;background:#dedede"></div>
<svg class="abs" style="left:192px;top:573px" width="12" height="14" viewBox="0 0 12 14"><rect x="1" y="2" width="9.5" height="11" rx="0.8" fill="#3d98cc"/><rect x="4.3" y="0.8" width="3" height="2.2" rx="0.6" fill="#3d98cc"/><rect x="5.3" y="1.8" width="1" height="1" fill="#fff" opacity=".8"/></svg>
<div class="abs td tj" style="left:208px;top:575px;width:218px;overflow:hidden">テスト仕様指摘修正</div>
<div class="abs td" style="left:433px;top:573px">PRJ-201</div>
<div class="abs td tj" style="left:513px;top:574px">L商品の開発</div>
<div class="abs td" style="left:593px;top:573px">73</div>
<div class="abs" style="left:674px;top:577px;width:8px;height:9px;border-radius:1.5px;background:#bdbdbd"></div>
<div class="abs td tj" style="left:689px;top:574px">未着手</div>
<div class="abs td" style="left:745px;width:72px;text-align:right;top:573px">0</div>
<div class="abs td dt" style="left:834px;top:573px">2025/09/30</div>
<div class="abs td dt" style="left:913px;top:573px">2025/10/02</div>
<div class="abs" style="left:180px;top:611px;width:805px;height:1px;background:#dedede"></div>
<svg class="abs" style="left:192px;top:594px" width="12" height="14" viewBox="0 0 12 14"><rect x="1" y="2" width="9.5" height="11" rx="0.8" fill="#3d98cc"/><rect x="4.3" y="0.8" width="3" height="2.2" rx="0.6" fill="#3d98cc"/><rect x="5.3" y="1.8" width="1" height="1" fill="#fff" opacity=".8"/></svg>
<div class="abs td tj" style="left:208px;top:596px;width:218px;overflow:hidden">非機能テスト</div>
<div class="abs td" style="left:433px;top:594px">PRJ-050</div>
<div class="abs td tj" style="left:513px;top:595px">T製品開発</div>
<div class="abs td" style="left:593px;top:594px">25</div>
<div class="abs" style="left:674px;top:598px;width:8px;height:9px;border-radius:1.5px;background:#2b3a9c"></div>
<div class="abs td tj" style="left:689px;top:595px">作業中</div>
<div class="abs td" style="left:745px;width:72px;text-align:right;top:594px">2</div>
<div class="abs td dt" style="left:834px;top:594px">2025/09/23</div>
<div class="abs td dt" style="left:913px;top:594px">2025/09/30</div>
<div class="abs" style="left:180px;top:631px;width:805px;height:1px;background:#dedede"></div>
<svg class="abs" style="left:192px;top:614px" width="12" height="14" viewBox="0 0 12 14"><rect x="1" y="2" width="9.5" height="11" rx="0.8" fill="#3d98cc"/><rect x="4.3" y="0.8" width="3" height="2.2" rx="0.6" fill="#3d98cc"/><rect x="5.3" y="1.8" width="1" height="1" fill="#fff" opacity=".8"/></svg>
<div class="abs td tj" style="left:208px;top:616px;width:218px;overflow:hidden">製作レビュー</div>
<div class="abs td" style="left:433px;top:614px">PRJ-050</div>
<div class="abs td tj" style="left:513px;top:615px">T製品開発</div>
<div class="abs td" style="left:593px;top:614px">44</div>
<div class="abs" style="left:674px;top:618px;width:8px;height:9px;border-radius:1.5px;background:#bdbdbd"></div>
<div class="abs td tj" style="left:689px;top:615px">未着手</div>
<div class="abs td" style="left:745px;width:72px;text-align:right;top:614px">0</div>
<div class="abs td dt" style="left:834px;top:614px">2025/09/30</div>
<div class="abs td dt" style="left:913px;top:614px">2025/10/03</div>
<div class="abs" style="left:180px;top:651px;width:805px;height:1px;background:#dedede"></div>
<svg class="abs" style="left:192px;top:634px" width="12" height="14" viewBox="0 0 12 14"><rect x="1" y="2" width="9.5" height="11" rx="0.8" fill="#3d98cc"/><rect x="4.3" y="0.8" width="3" height="2.2" rx="0.6" fill="#3d98cc"/><rect x="5.3" y="1.8" width="1" height="1" fill="#fff" opacity=".8"/></svg>
<div class="abs td tj" style="left:208px;top:636px;width:218px;overflow:hidden">不具合修正</div>
<div class="abs td" style="left:433px;top:634px">PRJ-050</div>
<div class="abs td tj" style="left:513px;top:635px">T製品開発</div>
<div class="abs td" style="left:593px;top:634px">45</div>
<div class="abs" style="left:674px;top:638px;width:8px;height:9px;border-radius:1.5px;background:#bdbdbd"></div>
<div class="abs td tj" style="left:689px;top:635px">未着手</div>
<div class="abs td" style="left:745px;width:72px;text-align:right;top:634px">0</div>
<div class="abs td dt" style="left:834px;top:634px">2025/09/30</div>
<div class="abs td dt" style="left:913px;top:634px">2025/10/03</div>
<div class="abs" style="left:180px;top:671px;width:805px;height:1px;background:#dedede"></div>
<svg class="abs" style="left:191px;top:654px" width="13" height="13" viewBox="0 0 13 13"><rect x="1" y="1" width="11.3" height="11.2" rx="1.4" fill="#3d98cc"/><polyline points="1,7.2 3.2,5.4 5.4,7.4 7.6,5.2 9.6,7 12.3,4.8" fill="none" stroke="#fff" stroke-width="1.2" stroke-linejoin="miter"/></svg>
<div class="abs td tj" style="left:208px;top:656px;width:218px;overflow:hidden">正常値範囲の未設定により0℃が表示されるバグ</div>
<div class="abs td" style="left:433px;top:654px">PRJ-011</div>
<div class="abs td tj" style="left:513px;top:655px">SI製品開発</div>
<div class="abs td" style="left:593px;top:654px">59</div>
<div class="abs" style="left:674px;top:658px;width:8px;height:9px;border-radius:1.5px;background:#bdbdbd"></div>
<div class="abs td tj" style="left:689px;top:655px">登録済</div>
<div class="abs td" style="left:745px;width:72px;text-align:right;top:654px">1</div>
<div class="abs td dt" style="left:834px;top:654px">2025/09/29</div>
<div class="abs td dt" style="left:913px;top:654px">2025/10/01</div>
<div class="abs" style="left:180px;top:692px;width:805px;height:1px;background:#dedede"></div>
<svg class="abs" style="left:190px;top:674px" width="15" height="14" viewBox="0 0 15 14"><rect x="1" y="1" width="1.6" height="12" fill="#3d98cc" opacity=".75"/><path d="M3.3 1.5 Q6 0.6 8.5 1.4 T13.8 1.3 V9.2 Q11 10.2 8.5 9.3 T3.3 9.6 Z" fill="#3d98cc"/></svg>
<div class="abs td tj" style="left:208px;top:676px;width:218px;overflow:hidden">キックオフ</div>
<div class="abs td" style="left:433px;top:674px">PRJ-002</div>
<div class="abs td tj" style="left:513px;top:675px">R2商品開発</div>
<div class="abs td" style="left:593px;top:674px">92</div>
<div class="abs" style="left:674px;top:678px;width:8px;height:9px;border-radius:1.5px;background:#bdbdbd"></div>
<div class="abs td tj" style="left:689px;top:675px">未着手</div>
<div class="abs td" style="left:745px;width:72px;text-align:right;top:674px">0</div>
<div class="abs td dt" style="left:834px;top:674px">2025/09/30</div>
<div class="abs td dt" style="left:913px;top:674px">2025/09/30</div>
<!-- annotation -->
<div class="abs" style="left:182px;top:166px;width:805px;height:522px;border-radius:6px;box-shadow:0 0 7px rgba(0,0,0,.16), inset 0 1px 11px rgba(0,0,0,.2)"></div>
<div class="abs" style="left:184px;top:168px;width:802px;height:10px;background:linear-gradient(rgba(0,0,0,.11),rgba(0,0,0,0))"></div>
<svg class="abs" style="left:0;top:0" width="1288" height="692"><rect x="182.8" y="166.6" width="803.6" height="520.9" rx="5" ry="5" fill="none" stroke="#ff0606" stroke-width="2.6"/></svg>

</body>
</html>
